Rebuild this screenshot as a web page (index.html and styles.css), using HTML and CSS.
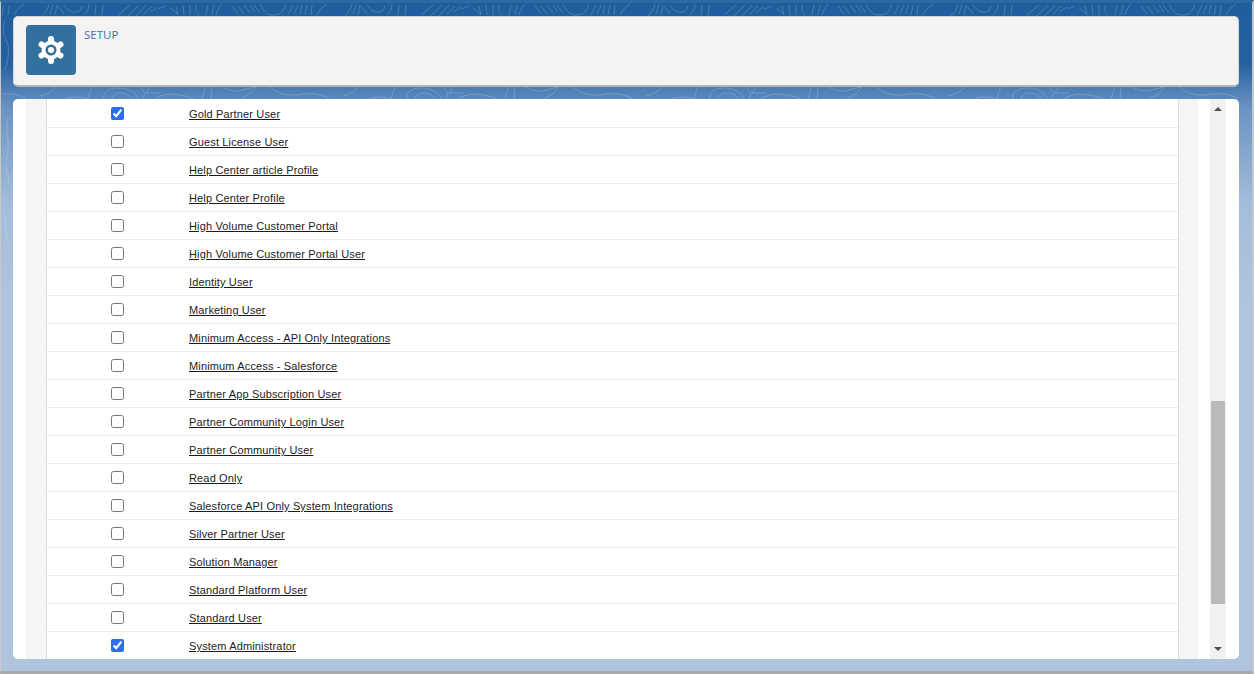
FILE: index.html
```html
<!DOCTYPE html>
<html lang="en">
<head>
<meta charset="utf-8">
<title>Setup</title>
<link rel="stylesheet" href="styles.css">
</head>
<body>
<div class="window">
  <svg class="contours" width="1254" height="300" aria-hidden="true">
    <defs>
      <pattern id="topo" width="303" height="300" patternUnits="userSpaceOnUse">
        <g fill="none" stroke="#ffffff" stroke-opacity=".18" stroke-width="1">
          <path d="M2 15l2-10M8 15l1-10M14 15c2-4 5-8 10-11M42 16c4-3 6-8 7-12M50 14l3-10M55 15l2-10M58 6l6 8M64 5c2 3 6 8 12 7c4 0 5-3 6-6M84 15c3-3 5-6 5-11M95 15l1-10M102 15l1-10"/>
          <path d="M118 15l12-10M128 16l11-11M136 16l10-11M144 14l8-8M150 12l8-5M158 9l8-3M170 8l8 6M178 15l-2-9M184 15l-1-10M190 15v-10M196 12v-7M198 15v-2M206 15l2-10M212 15l2-10M216 15c1-4 3-8 6-11"/>
          <path d="M232 6l6 8M238 6l6 8M244 5l6 8M250 5l5 7M254 5l6 8M260 4c2 4 6 12 14 11c8 0 10-6 12-11M288 15l5-10M294 14l4-9M300 14l2-9"/>
          <path d="M0 94c14-1 20 1 26 5M40 96c6-2 10-3 16-9M66 99c4-2 12-3 22 0M88 99c1-4 2-8 4-12M104 99c-2-6 4-11 14-11c10 0 18 4 20 11M112 99c0-3 4-6 8-6c6 0 10 2 12 6M140 87l5 6l-2 6M150 87l-4 6M146 93h14M155 99c8-6 20-6 34-2l5 2M205 87c0 4-2 8-3 12M212 87c0 4-1 8-1 12M223 87c6 4 14 5 20 3c4-1 8-2 12-3M255 87c-2 6-8 8-14 12M270 87c6 5 12 8 24 8c6 0 6-1 9-1"/>
          <path d="M5 20c-3 8-2 14 2 22c3 8 1 18-2 28M8 118c-4 12 3 24-1 38c-2 10 1 18 3 30M3 210c4 10 2 24 6 36"/>
        </g>
      </pattern>
    </defs>
    <rect width="1254" height="300" fill="url(#topo)"/>
  </svg>

  <header class="page-header">
    <div class="app-icon">
      <svg viewBox="0 0 32 32" width="32" height="32" aria-hidden="true">
        <path fill="none" stroke="#fff" stroke-width="6" stroke-linecap="round" d="M16 5V27M6.500 10.500L25.500 21.500M25.500 10.500L6.500 21.500"/>
        <circle cx="16" cy="16" r="9.5" fill="#fff"/>
        <circle cx="16" cy="16" r="5.5" fill="#32709e"/>
        <circle cx="16" cy="16" r="3" fill="#fff"/>
      </svg>
    </div>
    <div class="app-name">SETUP</div>
  </header>

  <main class="panel">
    <div class="gutter gutter-left"></div>
    <div class="rows">
      <div class="row"><input type="checkbox" checked><a href="#">Gold Partner User</a></div>
      <div class="row"><input type="checkbox"><a href="#">Guest License User</a></div>
      <div class="row"><input type="checkbox"><a href="#">Help Center article Profile</a></div>
      <div class="row"><input type="checkbox"><a href="#">Help Center Profile</a></div>
      <div class="row"><input type="checkbox"><a href="#">High Volume Customer Portal</a></div>
      <div class="row"><input type="checkbox"><a href="#">High Volume Customer Portal User</a></div>
      <div class="row"><input type="checkbox"><a href="#">Identity User</a></div>
      <div class="row"><input type="checkbox"><a href="#">Marketing User</a></div>
      <div class="row"><input type="checkbox"><a href="#">Minimum Access - API Only Integrations</a></div>
      <div class="row"><input type="checkbox"><a href="#">Minimum Access - Salesforce</a></div>
      <div class="row"><input type="checkbox"><a href="#">Partner App Subscription User</a></div>
      <div class="row"><input type="checkbox"><a href="#">Partner Community Login User</a></div>
      <div class="row"><input type="checkbox"><a href="#">Partner Community User</a></div>
      <div class="row"><input type="checkbox"><a href="#">Read Only</a></div>
      <div class="row"><input type="checkbox"><a href="#">Salesforce API Only System Integrations</a></div>
      <div class="row"><input type="checkbox"><a href="#">Silver Partner User</a></div>
      <div class="row"><input type="checkbox"><a href="#">Solution Manager</a></div>
      <div class="row"><input type="checkbox"><a href="#">Standard Platform User</a></div>
      <div class="row"><input type="checkbox"><a href="#">Standard User</a></div>
      <div class="row"><input type="checkbox" checked><a href="#">System Administrator</a></div>
    </div>
    <div class="gutter gutter-right"></div>
    <div class="scrollbar">
      <span class="arrow arrow-up"></span>
      <div class="track"><div class="thumb"></div></div>
      <span class="arrow arrow-down"></span>
    </div>
  </main>
  <div class="behind"></div>
</div>
</body>
</html>
```
FILE: styles.css
```css
* { box-sizing: border-box; }
html, body { margin: 0; height: 100%; overflow: hidden; background: #fff; }
.window {
  position: relative;
  width: 1254px;
  height: 674px;
  padding: 13px 13px 12px 12px;
  display: flex;
  flex-direction: column;
  gap: 12px;
  overflow: hidden;
  background: linear-gradient(#1f5e9d 0, #25619f 60px, #6a93c3 105px, #a4bcdb 200px, #b0c4de 300px, #b0c4de 100%);
  border-top: 3px solid #2b6ba3;
  border-left: 1px solid #c8c8c8;
  border-right: 2px solid #c8c8c8;
  border-bottom: 3px solid #a9a9a9;
}
.contours { position: absolute; left: -1px; top: -3px; }
.behind {
  position: absolute;
  left: -1px;
  right: -2px;
  bottom: -3px;
  height: 3px;
  background: linear-gradient(90deg, #b3b3b3 272px, #7d7d7d 272px, #7d7d7d 387px, #b5b81e 387px, #b5b81e 428px, #8a8a8a 428px);
}
.page-header {
  position: relative;
  flex: 0 0 71px;
  display: flex;
  gap: 8px;
  padding: 8px 12px;
  background: #f3f3f3;
  border-radius: 5px;
  border: 1px solid #d4d4d4;
  border-bottom: 2px solid #b5b5b5;
}
.app-icon {
  width: 50px;
  height: 50px;
  display: flex;
  align-items: center;
  justify-content: center;
  background: #32709e;
  border-radius: 4px;
}
.app-name {
  font: 11.5px/1 "Open Sans", sans-serif;
  color: #3a74a8;
  margin-top: 4px;
}
.panel {
  position: relative;
  flex: 1;
  display: flex;
  padding-left: 13px;
  background: #fff;
  border-radius: 5px;
  overflow: hidden;
}
.gutter {
  flex: none;
  background-color: #f6f6f6;
  background-image: radial-gradient(#f0f0f0 0.5px, transparent 0.6px);
  background-size: 3px 3px;
}
.gutter-left { width: 21px; border-right: 1px solid #dedede; }
.gutter-right { width: 20px; border-left: 1px solid #dedede; }
.rows { width: 1131px; flex: none; padding-top: 1px; }
.row {
  height: 28px;
  display: flex;
  align-items: center;
  padding-left: 64px;
  border-bottom: 1px solid #ececec;
}
.row input {
  width: 13px;
  height: 13px;
  margin: 0 65px 0 0;
  accent-color: #2b6ff0;
}
.row a {
  margin-top: 2px;
  font: 11px/1 "Liberation Sans", Arial, sans-serif;
  letter-spacing: .15px;
  color: #1c1c1c;
  text-decoration: underline;
}
.scrollbar {
  flex: none;
  width: 16px;
  margin-left: 12px;
  background: #f1f1f1;
  display: flex;
  flex-direction: column;
  align-items: center;
}
.track {
  flex: 1;
  width: 100%;
  display: flex;
  flex-direction: column;
  justify-content: flex-end;
  align-items: center;
  padding-bottom: 37px;
}
.thumb { width: 14px; height: 203px; background: #b9b9b9; }
.arrow { width: 0; height: 0; border-left: 4px solid transparent; border-right: 4px solid transparent; flex: none; }
.arrow-up { border-bottom: 4px solid #505050; margin: 8px 0 6px; }
.arrow-down { border-top: 4px solid #505050; margin: 6px 0 8px; }
```
